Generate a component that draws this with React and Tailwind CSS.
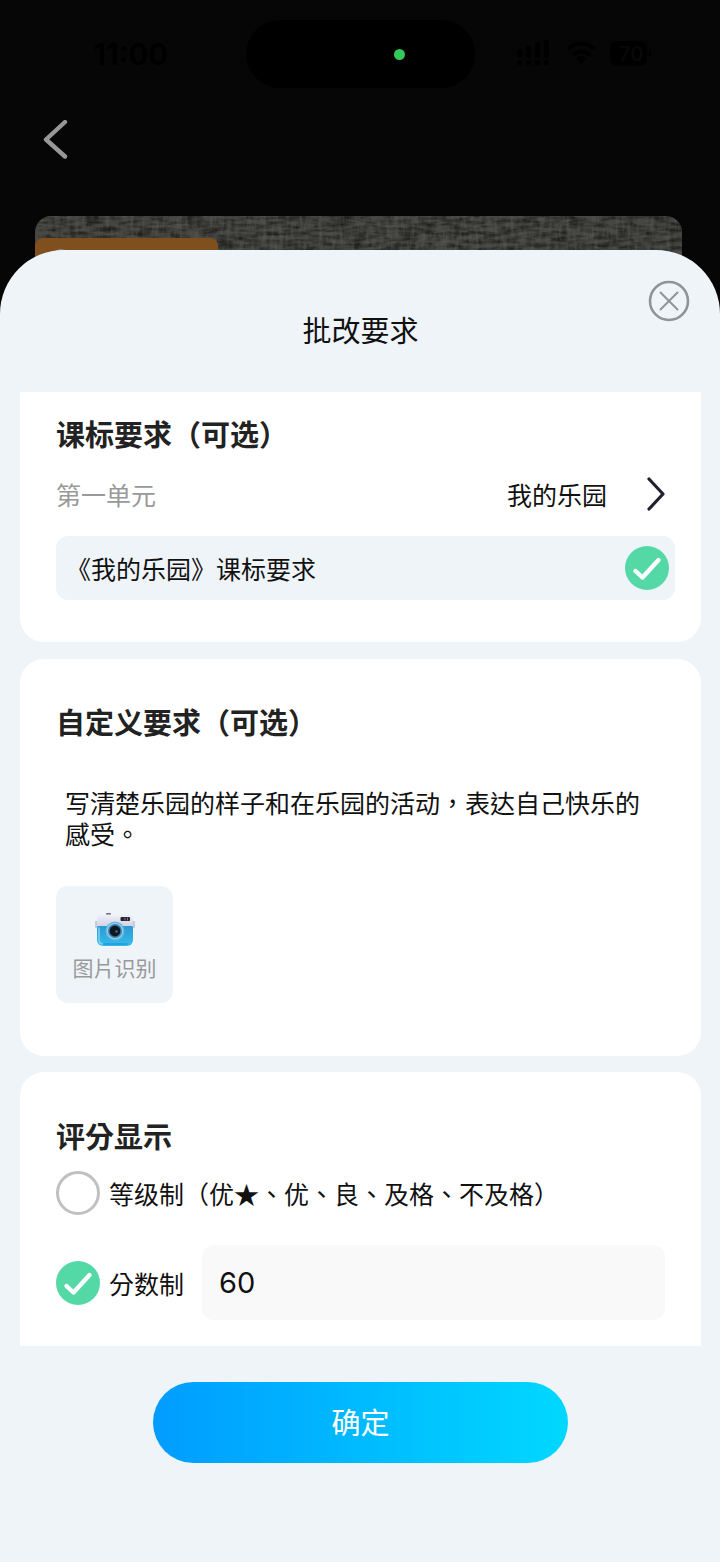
import { useState } from 'react'

const CARD = 'bg-white pl-9 pr-[26px]'

function Heading({ children, htmlFor }) {
  const cls = 'block text-[29px] leading-[40px] font-bold text-[#222222]'
  if (htmlFor) return <h2><label htmlFor={htmlFor} className={cls}>{children}</label></h2>
  return <h2 className={cls}>{children}</h2>
}

// round tick, used for both the checkbox and the radios
function Tick({ type = 'radio', ...rest }) {
  return (
    <span className="grid size-11 shrink-0">
      <input
        type={type}
        className="peer col-start-1 row-start-1 size-11 appearance-none rounded-full border-3 border-[#c0c0c0] bg-white checked:border-0 checked:bg-[#54d8a6]"
        {...rest}
      />
      <svg viewBox="0 0 44 44" className="pointer-events-none invisible col-start-1 row-start-1 size-11 peer-checked:visible" aria-hidden="true">
        <path d="M10.5 25 L17.5 31.5 L33.5 14" fill="none" stroke="#fff" strokeWidth="4.4" strokeLinecap="round" strokeLinejoin="round" />
      </svg>
    </span>
  )
}

function StatusIcons() {
  return (
    <svg viewBox="0 0 138 28" className="h-7 w-[138px]" fill="#000" aria-hidden="true">
      <rect x="2" y="9" width="5" height="9" rx="2" />
      <rect x="11" y="6" width="5" height="12" rx="2" />
      <rect x="20" y="3" width="5" height="15" rx="2" />
      <rect x="29" y="0" width="5" height="18" rx="2" />
      <rect x="2" y="20" width="5" height="5" rx="2" />
      <rect x="11" y="20" width="5" height="5" rx="2" />
      <rect x="20" y="20" width="5" height="5" rx="2" />
      <rect x="29" y="20" width="5" height="5" rx="2" />
      <g fill="none" stroke="#000" strokeWidth="4">
        <path d="M53 9 Q66 -2 80 9" />
        <path d="M58 15 Q66 8 75 15" />
      </g>
      <path d="M61 18 Q66 14 72 18 L66 24 Z" />
      <rect x="95" y="1" width="37" height="25" rx="7" />
      <path d="M134 9 q4 4 0 9 z" />
      <text x="104" y="21" fontSize="20" fontWeight="600" fontFamily="Inter, sans-serif" fill="#080808">70</text>
    </svg>
  )
}

function Fabric() {
  return (
    <svg className="h-full w-full" aria-hidden="true">
      <filter id="weft" x="0" y="0" width="100%" height="100%" colorInterpolationFilters="sRGB">
        <feTurbulence type="fractalNoise" baseFrequency="0.06 0.25" numOctaves="3" seed="4" />
        <feColorMatrix values="0 0 0 0 0  0 0 0 0 0  0 0 0 0 0  1.2 0 0 0 -0.4" />
      </filter>
      <filter id="warp" x="0" y="0" width="100%" height="100%" colorInterpolationFilters="sRGB">
        <feTurbulence type="fractalNoise" baseFrequency="0.25 0.06" numOctaves="3" seed="9" />
        <feColorMatrix values="0 0 0 0 0.4  0 0 0 0 0.4  0 0 0 0 0.37  1 0 0 0 -0.4" />
      </filter>
      <rect width="100%" height="100%" fill="#454542" />
      <rect width="100%" height="100%" filter="url(#weft)" />
      <rect width="100%" height="100%" filter="url(#warp)" />
    </svg>
  )
}

function Camera() {
  return (
    <svg viewBox="0 0 40 34" className="h-[34px] w-10" aria-hidden="true">
      <defs>
        <linearGradient id="cam-top" x1="0" y1="0" x2="0" y2="1">
          <stop offset="0" stopColor="#f0f0f7" />
          <stop offset="1" stopColor="#d3d5e6" />
        </linearGradient>
        <linearGradient id="cam-body" x1="0" y1="0" x2="0" y2="1">
          <stop offset="0" stopColor="#2b93cd" />
          <stop offset="1" stopColor="#35bcec" />
        </linearGradient>
      </defs>
      <rect x="11" y="0" width="5" height="3" rx="1" fill="#67697d" />
      <rect x="2" y="9" width="36" height="24" rx="6" fill="url(#cam-body)" />
      <path d="M4 15 V27 Q4 30 7 31" fill="none" stroke="#7fd4f2" strokeWidth="1.5" strokeLinecap="round" />
      <path d="M6 1.5 H33 Q37 1.5 38 6 L38.5 13 H1.5 L2 6 Q3 1.5 6 1.5 Z" fill="url(#cam-top)" />
      <path d="M1 8 V15 M39 8 V15" stroke="#b9bfce" strokeWidth="1.5" />
      <rect x="25.5" y="4" width="9.5" height="4" rx="1" fill="#25252f" />
      <path d="M30 4.5 V7.5 M32.5 4.5 V7.5" stroke="#777987" />
      <circle cx="20" cy="18" r="9.5" fill="#5fb9e4" />
      <circle cx="20" cy="18" r="8" fill="#9dd0ea" />
      <circle cx="20" cy="18" r="7" fill="#3c7fa8" />
      <circle cx="20" cy="18" r="5.4" fill="#101722" />
      <circle cx="21.5" cy="18.5" r="1.3" fill="#3f6f90" />
      <path d="M9 31 H32" stroke="#1f9ad4" strokeWidth="1.5" strokeLinecap="round" />
    </svg>
  )
}

export default function App() {
  const [useStandard, setUseStandard] = useState(true)
  const [custom, setCustom] = useState('写清楚乐园的样子和在乐园的活动，表达自己快乐的感受。')
  const [mode, setMode] = useState('score')
  const [score, setScore] = useState('60')

  return (
    <div className="flex min-h-screen flex-col bg-[#060606] font-['Noto_Sans_CJK_TC','Noto_Sans_CJK_SC',sans-serif] text-[25px] leading-[36px] text-[#111111]">
      {/* Dimmed page behind the sheet */}
      <div className="grid h-[88px] grid-cols-[1fr_229px_1fr] items-end">
        <div className="flex h-[68px] items-center justify-center pl-4 font-['Inter',sans-serif] text-[30px] font-semibold text-black">11:00</div>
        <div className="flex h-[68px] items-center justify-end rounded-full bg-black pr-[70px]">
          <span className="size-[11px] rounded-full bg-[#34c759]" />
        </div>
        <div className="flex h-[68px] items-center pl-10"><StatusIcons /></div>
      </div>
      <div className="flex h-32 items-start pt-8 pl-9">
        <button type="button" aria-label="返回" className="flex size-10 items-center justify-center">
          <svg viewBox="0 0 40 40" className="size-10" fill="none" stroke="#979797" strokeWidth="4.4" strokeLinecap="round" strokeLinejoin="round">
            <path d="M29 2 L10 19.5 L29 36.5" />
          </svg>
        </button>
      </div>
      <div className="relative mr-[38px] ml-[35px] h-24 overflow-hidden rounded-t-2xl">
        <Fabric />
        <div className="absolute top-[22px] left-0 h-20 w-[183px] overflow-hidden rounded-t-lg bg-[#7f4f1d] pt-[11px] pl-4">
          <span className="block size-5 rounded-full bg-[#8c8c8c]" />
        </div>
      </div>

      {/* Bottom sheet */}
      <main className="relative -mt-[62px] flex grow flex-col rounded-t-[64px] bg-[#eff4f9] pr-[19px] pl-5">
        <header className="relative flex h-[142px] items-center justify-center pt-4">
          <h1 className="text-[29px] leading-[40px]">批改要求</h1>
          <button type="button" aria-label="关闭" className="absolute top-[30px] right-[11px] size-[42px]">
            <svg viewBox="0 0 42 42" className="size-[42px]" fill="none" stroke="#919497" strokeLinecap="round">
              <circle cx="21" cy="21" r="19" strokeWidth="2.6" />
              <path d="M12.5 12.5 L29.5 29.5 M29.5 12.5 L12.5 29.5" strokeWidth="2" />
            </svg>
          </button>
        </header>

        <section className={`${CARD} rounded-b-3xl pt-[21px] pb-[42px]`}>
          <Heading>课标要求（可选）</Heading>
          <div className="mt-4 flex items-center justify-between pr-[10px]">
            <span className="text-[#999999]">第一单元</span>
            <button type="button" className="flex h-[50px] items-center gap-10">
              我的乐园
              <svg viewBox="0 0 18 34" className="h-[34px] w-[18px]" fill="none" stroke="#221f30" strokeWidth="3.2" strokeLinecap="round" strokeLinejoin="round">
                <path d="M2 2 L16 17 L2 32" />
              </svg>
            </button>
          </div>
          <label className="mt-[17px] flex h-16 items-center justify-between rounded-xl bg-[#eff4f9] pr-[6px] pl-[10px]">
            《我的乐园》课标要求
            <Tick type="checkbox" checked={useStandard} onChange={e => setUseStandard(e.target.checked)} />
          </label>
        </section>

        <section className={`${CARD} mt-[17px] rounded-3xl pt-[42px] pb-[53px]`}>
          <Heading htmlFor="custom">自定义要求（可选）</Heading>
          <textarea
            id="custom"
            value={custom}
            onChange={e => setCustom(e.target.value)}
            className="mt-[46px] block h-[80px] w-full resize-none pr-[22px] pl-[9px] leading-[31px] outline-none"
          />
          <button type="button" className="mt-[19px] flex size-[117px] flex-col items-center rounded-xl bg-[#eff4f9] pt-[27px]">
            <Camera />
            <span className="mt-[5px] text-[21px] leading-[30px] text-[#999999]">图片识别</span>
          </button>
        </section>

        <section className={`${CARD} mt-4 rounded-t-3xl pt-[43px] pb-[26px]`}>
          <Heading>评分显示</Heading>
          <label className="mt-4 flex items-center gap-[9px]">
            <Tick name="mode" checked={mode === 'grade'} onChange={() => setMode('grade')} />
            等级制（优★、优、良、及格、不及格）
          </label>
          <div className="mt-[30px] flex items-center gap-[18px] pr-[10px]">
            <label className="flex shrink-0 items-center gap-[9px]">
              <Tick name="mode" checked={mode === 'score'} onChange={() => setMode('score')} />
              分数制
            </label>
            <input
              type="text"
              inputMode="numeric"
              aria-label="分数"
              value={score}
              onChange={e => setScore(e.target.value)}
              className="h-[75px] min-w-0 grow rounded-xl bg-[#f9f9f9] px-[17px] font-['Inter',sans-serif] text-[29px] outline-none"
            />
          </div>
        </section>

        <button
          type="button"
          className="mt-9 mb-[99px] h-[81px] w-[61%] self-center rounded-full bg-linear-to-r from-[#029cff] to-[#00d8ff] pb-1 text-[29px] text-white"
        >
          确定
        </button>
      </main>
    </div>
  )
}
